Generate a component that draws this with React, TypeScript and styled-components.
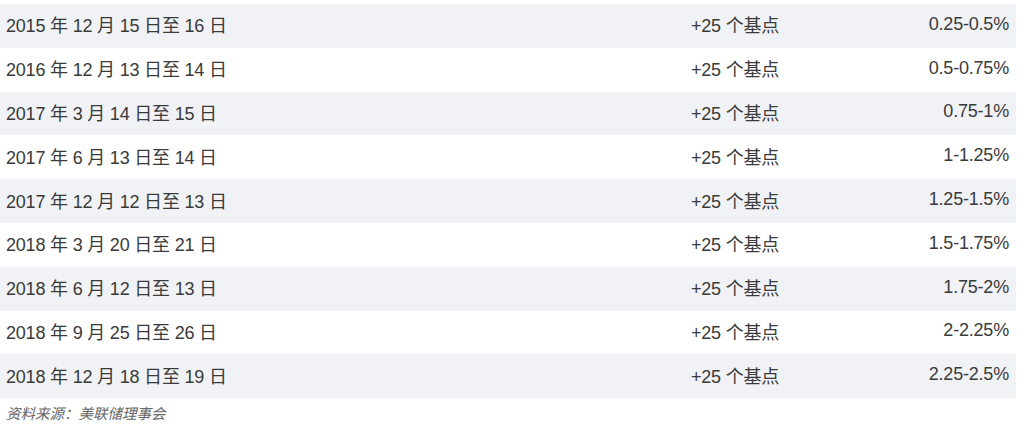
import styled, { createGlobalStyle } from "styled-components";

const GlobalStyle = createGlobalStyle`
  body {
    margin: 0;
    background: #fff;
    font-family: "Liberation Sans", "Noto Sans CJK SC", sans-serif;
  }
`;

const Page = styled.div`
  padding-top: 4px;
  width: 1016px;
`;

const Table = styled.div`
  display: grid;
  grid-template-columns: 685px 1fr 1fr;
`;

const Row = styled.div<{ $striped: boolean }>`
  display: contents;
  & > div {
    background: ${(p) => (p.$striped ? "#f0f2f5" : "#fff")};
  }
`;

const Cell = styled.div<{ $align?: "left" | "right" }>`
  box-sizing: border-box;
  height: 43.8px;
  display: flex;
  align-items: center;
  justify-content: ${(p) => (p.$align === "right" ? "flex-end" : "flex-start")};
  padding: ${(p) => (p.$align === "right" ? "0 7px 3px 0" : "0 0 3px 6px")};
  font-size: 18px;
  letter-spacing: -0.2px;
  color: #3a3a3a;
  white-space: nowrap;
`;

const Source = styled.div`
  padding: 4px 0 0 6px;
  font-size: 14.5px;
  font-style: italic;
  color: #666;
`;

const rows = [
  ["2015 年 12 月 15 日至 16 日", "0.25-0.5%"],
  ["2016 年 12 月 13 日至 14 日", "0.5-0.75%"],
  ["2017 年 3 月 14 日至 15 日", "0.75-1%"],
  ["2017 年 6 月 13 日至 14 日", "1-1.25%"],
  ["2017 年 12 月 12 日至 13 日", "1.25-1.5%"],
  ["2018 年 3 月 20 日至 21 日", "1.5-1.75%"],
  ["2018 年 6 月 12 日至 13 日", "1.75-2%"],
  ["2018 年 9 月 25 日至 26 日", "2-2.25%"],
  ["2018 年 12 月 18 日至 19 日", "2.25-2.5%"],
];

export default function App() {
  return (
    <Page>
      <GlobalStyle />
      <Table>
        {rows.map(([date, range], i) => (
          <Row key={date} $striped={i % 2 === 0}>
            <Cell>{date}</Cell>
            <Cell>+25 个基点</Cell>
            <Cell $align="right">{range}</Cell>
          </Row>
        ))}
      </Table>
      <Source>资料来源：美联储理事会</Source>
    </Page>
  );
}
